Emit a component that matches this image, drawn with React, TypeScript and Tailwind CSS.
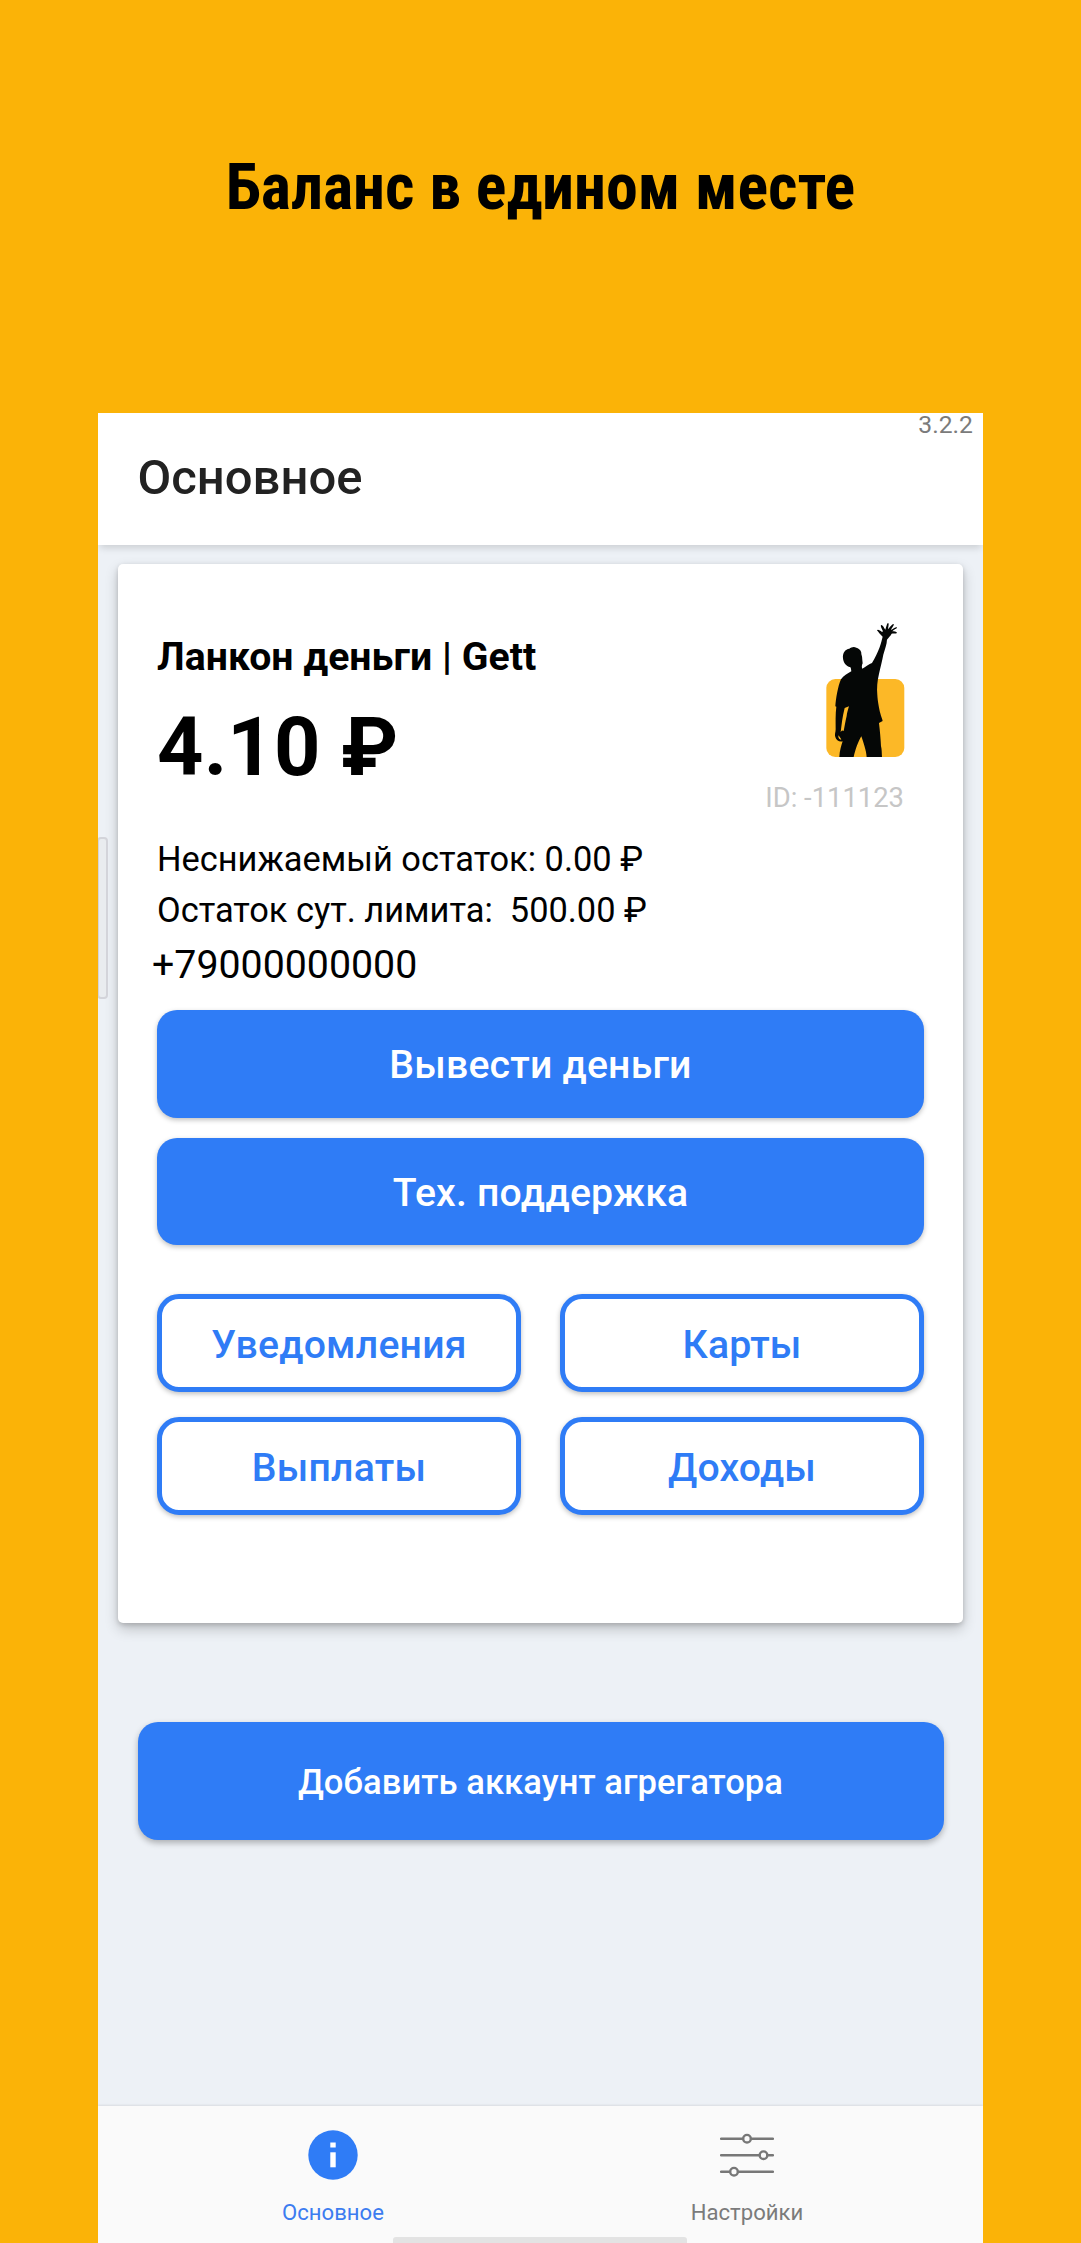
import type { ReactNode } from "react";

const account = {
  title: "Ланкон деньги | Gett",
  balance: "4.10 ₽",
  id: "ID: -111123",
  minBalance: "Неснижаемый остаток: 0.00 ₽",
  dayLimit: "Остаток сут. лимита:  500.00 ₽",
  phone: "+79000000000",
};

const links = ["Уведомления", "Карты", "Выплаты", "Доходы"];

function PrimaryButton({ children }: { children: ReactNode }) {
  return (
    <button className="flex h-[107.5px] w-full items-center justify-center rounded-[20px] bg-[#2f7cf6] pt-[4px] text-[39.2px] leading-none font-medium tracking-[0.2px] text-white shadow-[0_2px_5px_rgba(0,0,0,0.25)]">
      {children}
    </button>
  );
}

function OutlineButton({ children }: { children: ReactNode }) {
  return (
    <button className="flex h-[98px] items-center justify-center rounded-[22px] border-[5px] border-[#2f7cf6] bg-white pt-[5px] text-[39.2px] leading-none font-medium tracking-[0.2px] text-[#2f7cf6] shadow-[0_2px_5px_rgba(0,0,0,0.25)]">
      {children}
    </button>
  );
}

function Logo() {
  return (
    <svg viewBox="228 66 238 408" className="h-[136px] w-[79.3px]">
      <rect x="229" y="237" width="234" height="234" rx="27" fill="#fcb827" />
      <path
        fill="#050706"
        d="M268 471 C269 452 274 436 278 424 C268 427 258 420 256 411 C253 404 257 397 257 388
           C257 368 256 343 259 320 L256 319 C258 296 263 261 273 238 C281 227 292 221 304 214
           C303 208 303 204 301 202 C288 199 280 188 279 175 C277 159 286 147 298 146
           C304 142 311 139 319 143 C331 147 335 155 334 162 C336 167 337 173 337 180
           L338 190 C335 196 335 202 337 206 C346 201 358 191 366 189 C375 175 383 157 389 142
           C393 130 396 119 398 110 C391 105 386 96 381 91 C383 87 390 91 396 96
           L399 94 C395 86 391 78 393 75 C397 73 402 82 406 89
           C409 81 411 70 414 69 C418 69 415 80 414 88
           C419 82 426 72 431 72 C434 74 425 84 423 90
           C429 86 438 80 441 82 C442 86 432 89 427 94
           C432 94 440 95 441 98 C440 102 430 100 425 101
           C421 108 416 113 411 119 C411 132 404 149 400 164
           C397 181 391 203 387 222 C382 242 380 265 382 284
           C383 304 388 328 391 340 C393 350 397 356 398 363 L387 369
           C390 393 392 419 393 438 C396 449 395 460 396 471 L350 471
           C349 452 340 427 334 409 C325 424 316 448 311 471 Z"
      />
      <path fill="#fcb827" d="M284 324 L297 319 C294 330 291 338 290 348 C286 365 284 379 281 393 C276 389 274 393 272 397 C275 374 277 350 284 324 Z" />
      <path fill="#fcb827" d="M265 406 C270 411 272 417 276 420 C269 420 264 415 265 406 Z" />
      <path stroke="#050706" strokeWidth="4" fill="none" d="M271 398 C275 405 277 411 276 420" />
    </svg>
  );
}

function InfoIcon() {
  return (
    <svg viewBox="0 0 50 50" className="size-[50px]">
      <circle cx="25" cy="25" r="24.7" fill="#2f7cf6" />
      <rect x="22.3" y="12.5" width="5.4" height="5" fill="#fff" />
      <rect x="22.3" y="22.3" width="5.4" height="15" fill="#fff" />
    </svg>
  );
}

function SlidersIcon() {
  return (
    <svg viewBox="0 0 54 50" className="h-[50px] w-[54px]" fill="none" stroke="#777" strokeWidth="2.4" strokeLinecap="round">
      <path d="M1 8.7H23M31 8.7H53M1 25.2H39.5M47.5 25.2H53M1 41.7H10M18 41.7H53" />
      <circle cx="27" cy="8.7" r="3.8" />
      <circle cx="43.5" cy="25.2" r="3.8" />
      <circle cx="14" cy="41.7" r="3.8" />
    </svg>
  );
}

export default function App() {
  return (
    <div className="flex h-[2243px] w-[1081px] flex-col overflow-hidden bg-[#fbb307] font-['Roboto','Liberation_Sans',sans-serif]">
      <h1 className="mt-[148px] h-[80px] text-center text-[64px] leading-[80px] font-bold text-black font-stretch-condensed">
        Баланс в едином месте
      </h1>

      {/* Phone screen */}
      <div className="relative mt-[185px] ml-[98px] flex w-[885px] flex-1 flex-col bg-[#edf1f6] [clip-path:inset(-4px_0_0)]">
        <header className="relative z-10 flex h-[132px] shrink-0 items-center bg-white pb-[2px] pl-[39.5px] shadow-[0_5px_7px_-2px_rgba(0,0,0,0.14)]">
          <h2 className="text-[49px] leading-[60px] font-medium text-[#222]">Основное</h2>
          <span className="absolute top-0 right-[10px] text-[24.7px] leading-[24px] text-[#7b7b7b]">3.2.2</span>
        </header>

        {/* Account card */}
        <section className="relative mx-[20px] mt-[19px] h-[1059px] shrink-0 rounded-[5px] bg-white px-[39px] pt-[70px] text-black shadow-[0_6px_14px_rgba(0,0,0,0.2),0_2px_5px_rgba(0,0,0,0.16)]">
          <div className="flex justify-between">
            <div>
              <h3 className="text-[39.2px] leading-[46px] font-bold tracking-[0.05px]">{account.title}</h3>
              <p className="mt-[23px] text-[81px] leading-[90px] font-bold tracking-[0.2px]">{account.balance}</p>
            </div>
            <div className="-mt-[12px] mr-[19px] flex flex-col items-end">
              <Logo />
              <span className="mt-[24px] mr-px text-[27.4px] leading-[32px] text-[#c6c6c6]">{account.id}</span>
            </div>
          </div>

          <div className="mt-[20px] text-[34.4px] leading-[51px] whitespace-pre">
            <p>{account.minBalance}</p>
            <p>{account.dayLimit}</p>
          </div>
          <p className="mt-[3px] -ml-[5px] text-[39.3px] leading-[52px]">{account.phone}</p>

          <div className="mt-[19px] flex flex-col gap-[20px]">
            <PrimaryButton>Вывести деньги</PrimaryButton>
            <PrimaryButton>Тех. поддержка</PrimaryButton>
          </div>

          <div className="mt-[49.3px] grid grid-cols-2 gap-x-[39px] gap-y-[24.8px]">
            {links.map((label) => (
              <OutlineButton key={label}>{label}</OutlineButton>
            ))}
          </div>
        </section>

        <button className="mx-[39.5px] mt-[99px] flex h-[118px] shrink-0 items-center justify-center rounded-[20px] bg-[#2f7cf6] pt-[3px] text-[34.6px] leading-none font-medium tracking-[0.05px] text-white shadow-[0_3px_6px_rgba(0,0,0,0.28)]">
          Добавить аккаунт агрегатора
        </button>

        {/* Edge panel handle */}
        <div className="absolute top-[424px] -left-px h-[162px] w-[11px] rounded-[4px] border-2 border-[#d3d4da] bg-[#e9ecef]" />

        <nav className="relative mt-auto grid h-[137px] shrink-0 grid-cols-2 bg-[#fafafa] pr-[29px] pl-[28px] pt-[24px] text-[22.1px] leading-[26px] shadow-[0_-1px_2px_rgba(0,0,0,0.09)]">
          <div className="flex flex-col items-center gap-[19px] text-[#3c7cf0]">
            <InfoIcon />
            <span>Основное</span>
          </div>
          <div className="flex flex-col items-center gap-[19px] text-[#7b7b7b]">
            <SlidersIcon />
            <span>Настройки</span>
          </div>
          <div className="absolute bottom-0 left-[295px] h-[6.5px] w-[294px] rounded-t-[3px] bg-[#e3e3e3]" />
        </nav>
      </div>
    </div>
  );
}
